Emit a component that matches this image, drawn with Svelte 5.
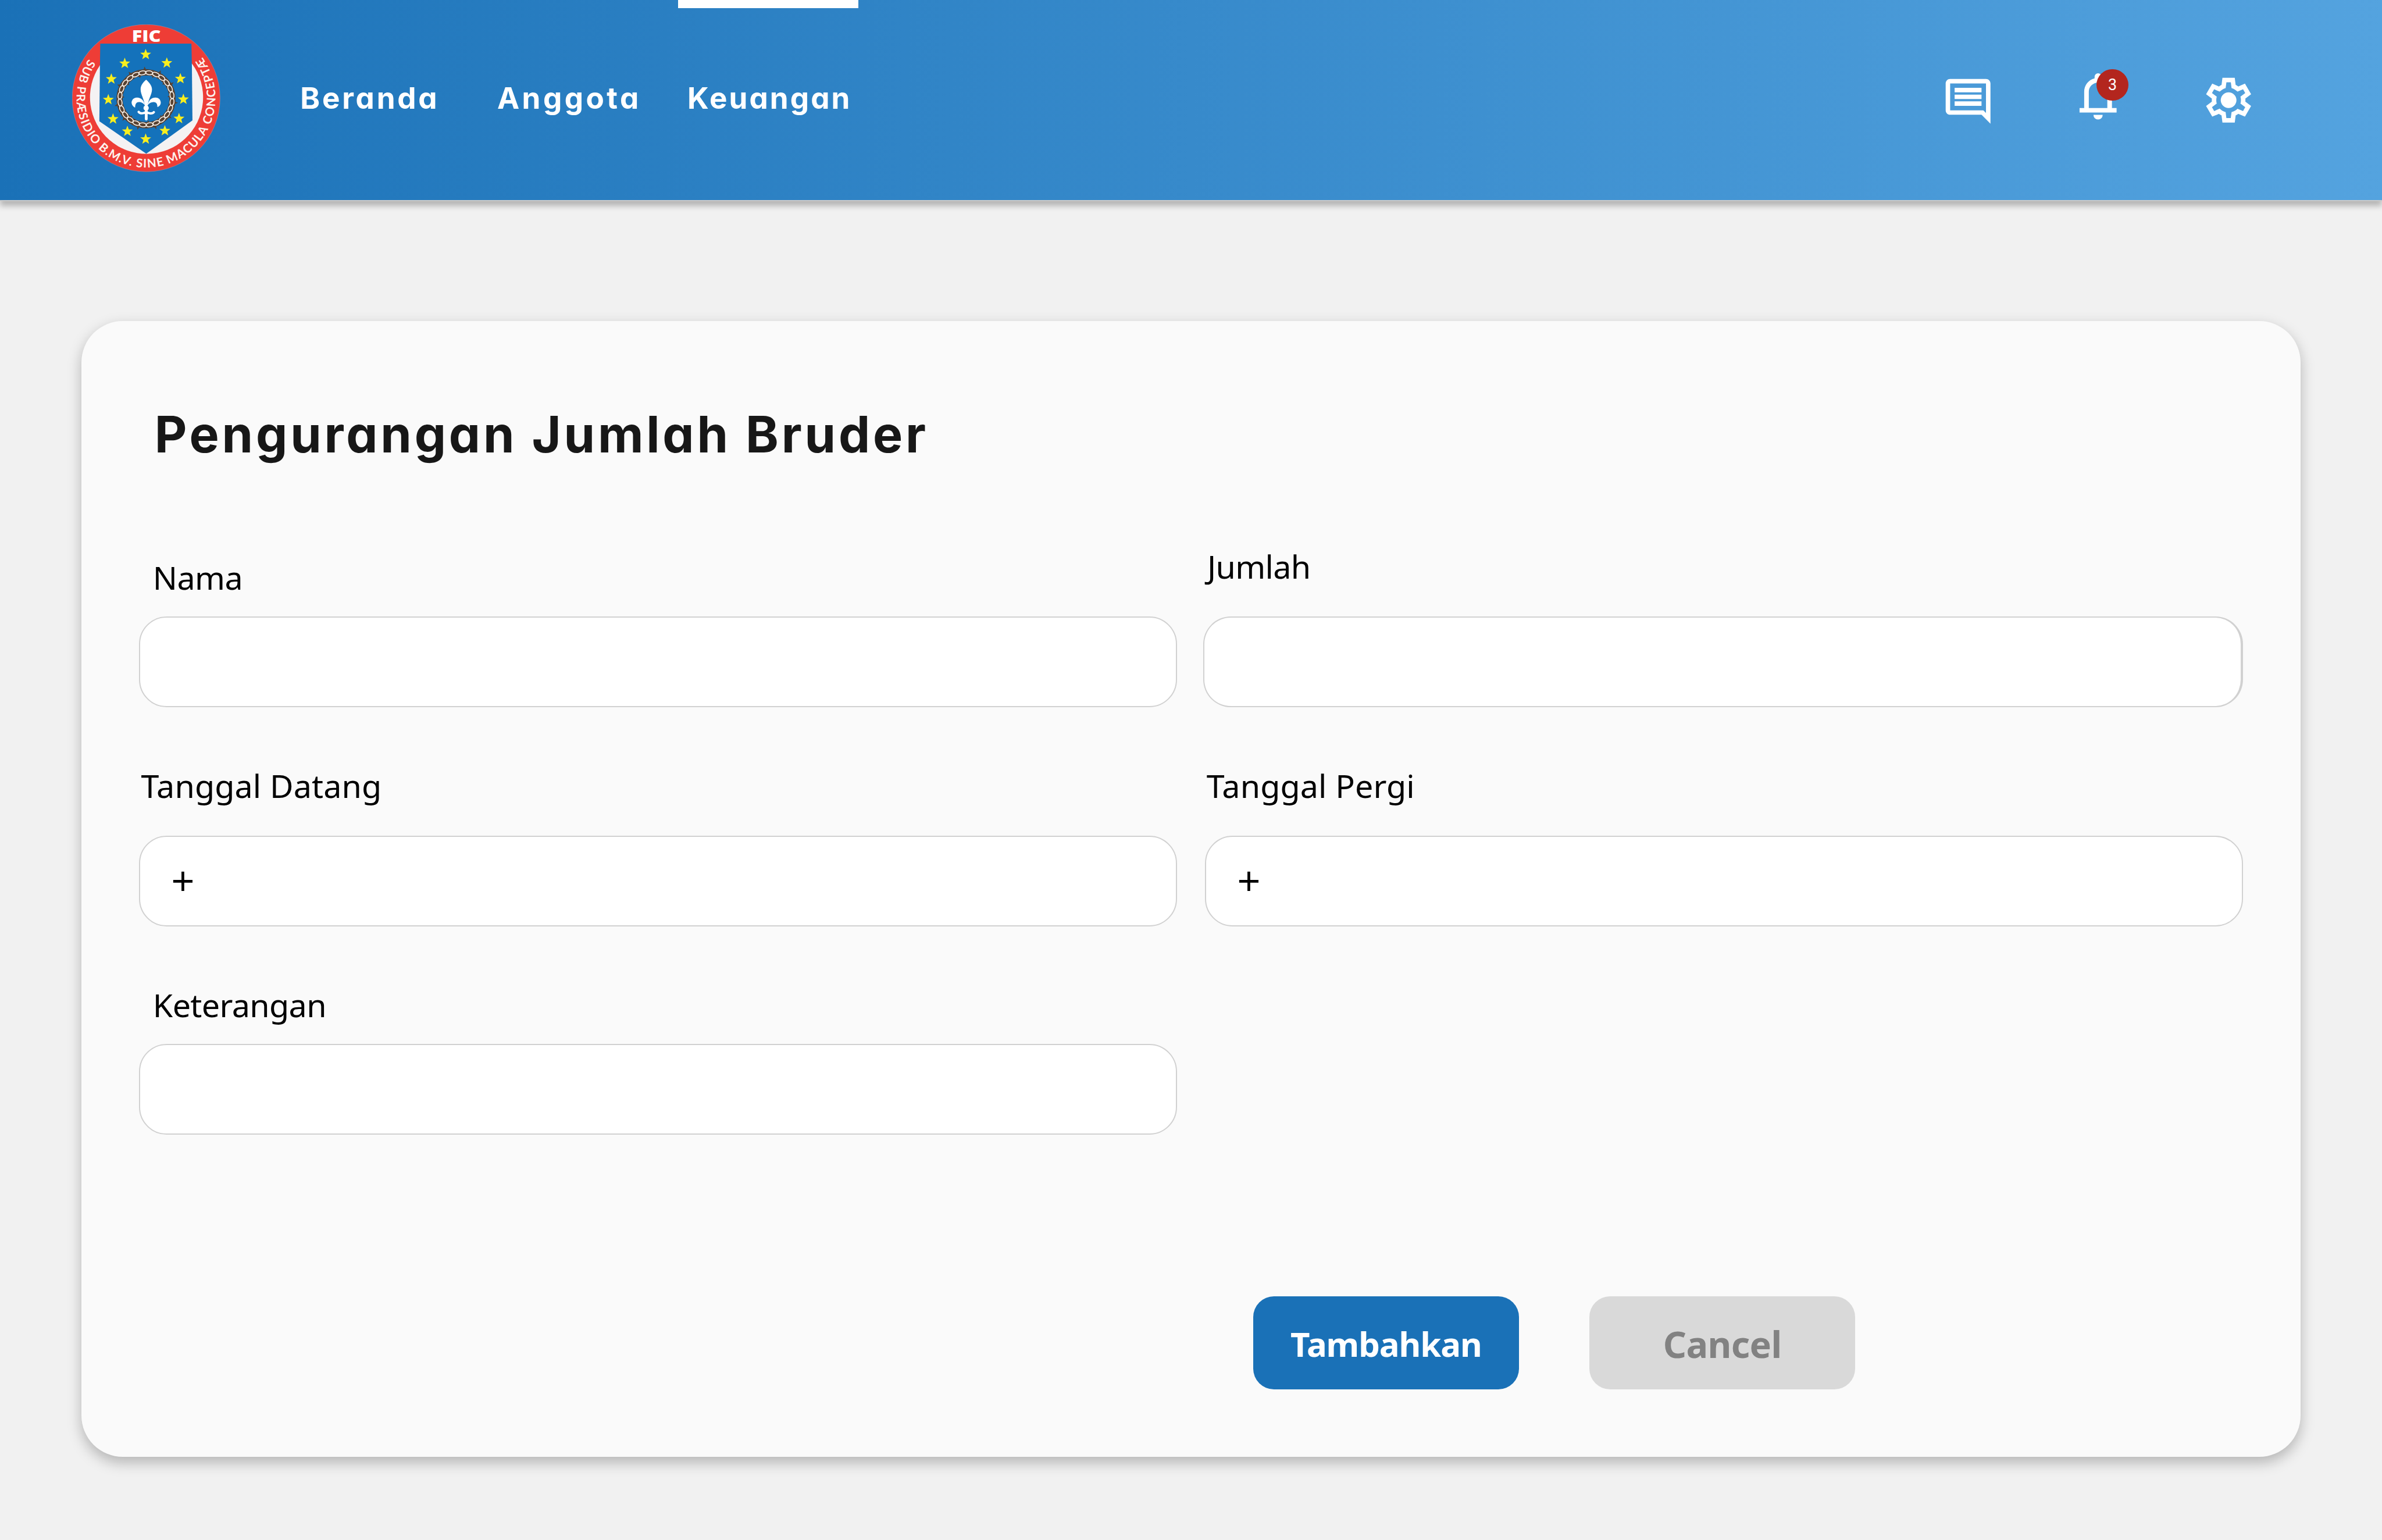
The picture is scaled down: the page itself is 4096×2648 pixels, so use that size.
<script>
  // Five-pointed star outline around a centre point
  function star(cx, cy, r = 50) {
    const pts = [];
    for (let i = 0; i < 10; i++) {
      const rad = i % 2 ? r * 0.42 : r;
      const a = (-90 + i * 36) * Math.PI / 180;
      pts.push(`${(cx + rad * Math.cos(a)).toFixed(1)},${(cy + rad * Math.sin(a)).toFixed(1)}`);
    }
    return pts.join(' ');
  }

  const stars = [
    [730, 357], [548, 434], [914, 431], [431, 570], [1032, 567], [405, 750],
    [1058, 747], [446, 918], [1020, 914], [571, 1025], [897, 1020], [730, 1093]
  ];
  const links = Array.from({ length: 24 }, (_, i) => i * 15 + 7);
  const thorns = [-92, -62, -30, 8, 38, 72, 106, 138, 168, 207, 238];
  const innerThorns = [-105, -72, -40, -5, 50, 85, 130, 185, 220];

  const nav = [
    { label: 'Beranda', cls: 'beranda', active: false },
    { label: 'Anggota', cls: 'anggota', active: false },
    { label: 'Keuangan', cls: 'keuangan', active: true }
  ];
</script>

{#snippet plus()}
  <svg class="plus" viewBox="0 0 24 24"><path d="M19 13h-6v6h-2v-6H5v-2h6V5h2v6h6z" /></svg>
{/snippet}

<div class="page">
  <header>
    <svg class="logo" viewBox="90 95 1288 1282" preserveAspectRatio="none">
      <defs>
        <path id="motto" d="M234.6 394.8A604 604 0 1 0 1216.6 374.2" />
      </defs>
      <ellipse cx="734" cy="736" rx="643" ry="640" fill="#ee3d36" stroke="#b58b9c" stroke-width="3" />
      <path d="M333 449A492 492 0 1 0 1132 435Z" fill="#f4f2f3" />
      <path d="M335 262H1128L1132 445L1137 930L735 1220L327 937L332 460Z" fill="#1472bb" />
      {#each stars as [x, y]}
        <polygon points={star(x, y)} fill="#f8ee1e" />
      {/each}
      <g fill="#594231">
        {#each thorns as a}
          <path d="M248 -13L280 -4L248 13Z" transform="translate(733 742) rotate({a})" />
        {/each}
        {#each innerThorns as a}
          <path d="M212 -13L188 -3L212 13Z" transform="translate(733 742) rotate({a})" />
        {/each}
      </g>
      <circle cx="733" cy="742" r="230" fill="none" stroke="#594231" stroke-width="54" />
      <g fill="none" stroke="#f7f1ea" stroke-width="8">
        {#each links as a}
          <ellipse cx="0" cy="-228" rx="32" ry="17" transform="translate(733 742) rotate({a})" />
        {/each}
      </g>
      <g fill="#fff">
        <path d="M734 576C760 600 785 625 785 660C785 705 752 745 748 800H722C718 745 686 705 686 660C686 625 708 600 734 576Z" />
        <path d="M724 800C715 755 690 731 655 731C620 731 605 760 608 780C611 800 625 812 638 818C640 790 645 773 670 771C695 770 712 783 724 800Z" />
        <path d="M746 800C755 755 780 731 815 731C850 731 864 760 861 780C858 800 845 808 832 814C832 790 825 773 800 771C775 770 758 783 746 800Z" />
        <circle cx="734" cy="822" r="23" />
        <rect x="723" y="790" width="24" height="141" rx="12" />
      </g>
      <path d="M669 856C680 873 715 872 735 856C755 872 790 873 801 858" fill="none" stroke="#fff" stroke-width="20" stroke-linecap="round" />
      <text class="fic" x="610" y="245" textLength="252" lengthAdjust="spacingAndGlyphs">FIC</text>
      <text class="motto"><textPath href="#motto" textLength="2640" lengthAdjust="spacing">SUB PRÆSIDIO B.M.V. SINE MACULA CONCEPTÆ</textPath></text>
    </svg>

    <nav>
      {#each nav as item}
        <a class={item.cls} class:active={item.active}>{item.label}</a>
      {/each}
    </nav>

    <div class="actions">
      <svg class="chat" viewBox="0 0 24 24"><path d="M22 4c0-1.1-.9-2-2-2H4c-1.1 0-2 .9-2 2v12c0 1.1.9 2 2 2h14l4 4V4zm-2 13.17L18.83 16H4V4h16v13.17zM6 12h12v2H6zm0-3h12v2H6zm0-3h12v2H6z" /></svg>
      <div class="bell">
        <svg viewBox="0 -960 960 960"><path d="M160-200v-80h80v-280q0-83 50-147.5T420-792v-28q0-25 17.5-42.5T480-880q25 0 42.5 17.5T540-820v28q80 20 130 84.5T720-560v280h80v80H160Zm320 120q-33 0-56.5-23.5T400-160h160q0 33-23.5 56.5T480-80ZM320-280h320v-280q0-66-47-113t-113-47q-66 0-113 47t-47 113v280Z" /></svg>
        <span class="badge">3</span>
      </div>
      <svg class="gear" viewBox="0 -960 960 960"><path d="m370-80-16-128q-13-5-24.5-12T307-235l-119 50L78-375l103-78q-1-7-1-13.5v-27q0-6.5 1-13.5L78-585l110-190 119 50q11-8 23-15t24-12l16-128h220l16 128q13 5 24.5 12t22.5 15l119-50 110 190-103 78q1 7 1 13.5v27q0 6.5-1 13.5l103 78-110 190-119-50q-11 8-23 15t-24 12L590-80H370Zm70-80h79l14-106q31-8 57.5-23.5T639-327l99 41 39-68-86-65q5-14 7-29.5t2-31.5q0-16-2-31.5t-7-29.5l86-65-39-68-99 42q-22-23-48.5-38.5T533-694l-13-106h-79l-14 106q-31 8-57.5 23.5T321-633l-99-41-39 68 86 64q-5 15-7 30t-2 32q0 16 2 31t7 30l-86 65 39 68 99-42q22 23 48.5 38.5T427-266l13 106Z" /><circle cx="480" cy="-480" r="140" /></svg>
    </div>
  </header>

  <main>
    <h1>Pengurangan Jumlah Bruder</h1>
    <form>
      <div class="field near indent">
        <span class="label tight">Nama</span>
        <div class="input"></div>
      </div>
      <div class="field">
        <span class="label tight jumlah">Jumlah</span>
        <div class="input heavy"></div>
      </div>
      <div class="field">
        <span class="label">Tanggal Datang</span>
        <div class="input">{@render plus()}</div>
      </div>
      <div class="field shifted">
        <span class="label">Tanggal Pergi</span>
        <div class="input">{@render plus()}</div>
      </div>
      <div class="field near indent">
        <span class="label tight">Keterangan</span>
        <div class="input"></div>
      </div>
    </form>
    <div class="buttons">
      <button class="primary" type="button">Tambahkan</button>
      <button class="secondary" type="button">Cancel</button>
    </div>
  </main>
</div>

<style>
  /* 1rem is one unit of the 1728-wide design */
  :global(html) { font-size: calc(100vw / 1728); }
  :global(body) { margin: 0; background: #f1f1f1; }
  .page {
    height: 100vh;
    overflow: hidden;
    background: #f1f1f1;
    font-family: "Noto Sans", "Open Sans", sans-serif;
  }
  header {
    box-sizing: border-box;
    height: 146rem;
    display: flex;
    align-items: flex-start;
    padding-left: 52.5rem;
    background: linear-gradient(90deg, #1a71b7, #54a3df) padding-box;
    border-bottom: 1rem solid #cacaca;
    box-shadow: 0 4rem 4rem rgba(0, 0, 0, 0.25);
  }
  .logo { flex: none; width: 107.4rem; height: 106.9rem; margin-top: 17.9rem; }
  .fic { font: 800 144px "Open Sans", sans-serif; fill: #fff; }
  .motto { font: 700 104px Lato, sans-serif; fill: #fdf3ee; }

  nav {
    display: grid;
    grid-template-columns: 142.9rem 131.2rem 131rem;
    height: 145rem;
    margin-left: 57.9rem;
    font: 740 21.6rem/32rem Inter, sans-serif;
    font-feature-settings: "cv11";
    color: #fff;
  }
  nav a {
    display: flex;
    align-items: center;
    box-sizing: border-box;
    padding-bottom: 2.4rem;
    white-space: nowrap;
  }
  .beranda { letter-spacing: 1.6rem; }
  .anggota { letter-spacing: 1.87rem; }
  .keuangan { letter-spacing: 1.3rem; padding-left: 6.8rem; }
  .active { background: linear-gradient(#fff, #fff) top / 100% 6rem no-repeat; }

  .actions { display: flex; margin-left: auto; padding-right: 92rem; }
  .actions svg { display: block; fill: #fff; }
  .chat { width: 39rem; height: 39rem; margin-top: 54rem; }
  .bell { position: relative; width: 40.3rem; height: 40.3rem; margin: 49.8rem 54.9rem 0 54.8rem; }
  .gear { width: 39rem; height: 39rem; margin-top: 53rem; }
  .badge {
    position: absolute;
    left: 19.2rem;
    top: 0.2rem;
    width: 23rem;
    height: 23rem;
    border-radius: 50%;
    background: #b3261e;
    color: #fff;
    font: 450 11.3rem/23rem Roboto, sans-serif;
    text-align: center;
  }

  main {
    box-sizing: border-box;
    width: 1610rem;
    height: 824rem;
    margin: 87rem 0 0 59rem;
    padding: 60.1rem 42rem 0;
    border-radius: 30rem;
    background: #fafafa;
    box-shadow: 0 4rem 10rem rgba(0, 0, 0, 0.25);
  }
  h1 {
    margin: 0 0 57.9rem;
    padding-left: 11.1rem;
    font: 750 36.3rem/44rem Inter, sans-serif;
    font-feature-settings: "cv11";
    letter-spacing: 2.03rem;
    color: #171717;
  }
  form {
    display: grid;
    grid-template-columns: 753rem 754rem;
    column-gap: 19rem;
    row-gap: 40.9rem;
    align-items: end;
  }
  .field { display: flex; flex-direction: column; gap: 20.15rem; }
  .near { gap: 12.1rem; }
  .shifted { margin-left: 1rem; }
  .label {
    padding-left: 1.3rem;
    font-size: 23.45rem;
    line-height: 32rem;
    letter-spacing: 0.06rem;
    color: #000;
  }
  .indent .label { padding-left: 9.9rem; }
  .tight { letter-spacing: -0.26rem; }
  .jumlah { padding-left: 2.8rem; }
  .input {
    box-sizing: border-box;
    height: 66rem;
    display: flex;
    align-items: center;
    padding-left: 19rem;
    border: 1rem solid #d1d1d1;
    border-radius: 20rem;
    background: #fff;
  }
  .heavy { border-right-width: 2rem; }
  .plus { width: 24rem; height: 24rem; }

  .buttons { display: flex; gap: 51rem; margin: 117rem 0 0 808rem; }
  button {
    box-sizing: border-box;
    width: 193rem;
    height: 67.7rem;
    border: 0;
    border-radius: 15rem;
    padding: 1.6rem 0 0;
    font-family: inherit;
    font-weight: 700;
  }
  .primary { background: #1a71b7; color: #fff; font-size: 24.5rem; letter-spacing: -0.44rem; }
  .secondary { background: #d9d9d9; color: #828282; font-size: 26.5rem; letter-spacing: -0.25rem; }
</style>
